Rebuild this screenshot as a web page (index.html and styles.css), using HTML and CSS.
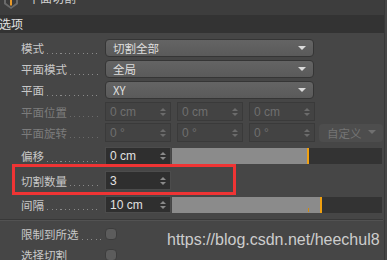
FILE: index.html
```html
<!DOCTYPE html>
<html>
<head>
<meta charset="utf-8">
<link rel="stylesheet" href="styles.css">
</head>
<body>
<div class="panel">
  <div class="titlebar">
    <svg class="ico" width="16" height="10" viewBox="0 0 16 10"><path d="M1 0 L1 4 L8 9 L15 4 L15 0 Z" fill="#6a6a6a"/><path d="M3 0 L3 3 L8 7 L13 3 L13 0 Z" fill="#3a3a3a"/><path d="M7 0 L7 5 L8 6 L9 5 L9 0 Z" fill="#e89a2a"/></svg>
    <span class="title">平面切割</span>
  </div>
  <div class="section">选项</div>
  <div class="rows">
    <div class="row r-sel"><span class="label">模式</span><div class="select"><span>切割全部</span><i class="arrow"></i></div></div>
    <div class="row r-sel"><span class="label">平面模式</span><div class="select"><span>全局</span><i class="arrow"></i></div></div>
    <div class="row r-sel"><span class="label">平面</span><div class="select"><span>XY</span><i class="arrow"></i></div></div>
    <div class="row r-pos"><span class="label dim">平面位置</span>
      <div class="num"><span>0 cm</span><i class="spin"></i></div>
      <div class="num"><span>0 cm</span><i class="spin"></i></div>
      <div class="num"><span>0 cm</span><i class="spin"></i></div>
    </div>
    <div class="row r-rot"><span class="label dim">平面旋转</span>
      <div class="num"><span>0 °</span><i class="spin"></i></div>
      <div class="num"><span>0 °</span><i class="spin"></i></div>
      <div class="num"><span>0 °</span><i class="spin"></i></div>
      <div class="btn"><span>自定义</span><i class="arrow"></i></div>
    </div>
    <div class="row r-off"><span class="label">偏移</span>
      <div class="num on"><span>0 cm</span><i class="spin"></i></div>
      <div class="slider"><div class="fill" style="width:135px"></div><div class="mark"></div></div>
    </div>
    <div class="row r-cnt"><span class="label">切割数量</span>
      <div class="num on"><span>3</span><i class="spin"></i></div>
    </div>
    <div class="row r-gap"><span class="label">间隔</span>
      <div class="num on"><span>10 cm</span><i class="spin"></i></div>
      <div class="slider"><div class="fill" style="width:148px"></div><div class="mark"></div><div class="tick"></div></div>
    </div>
  </div>
  <div class="sep"></div>
  <div class="checks">
    <div class="row r-chk"><span class="label">限制到所选</span><i class="check"></i></div>
    <div class="row r-chk"><span class="label">选择切割</span><i class="check"></i></div>
  </div>
</div>
<div class="redbox"></div>
<div class="watermark">https://blog.csdn.net/heechul8</div>
</body>
</html>
```
FILE: styles.css
```css
html, body {
  margin: 0;
  padding: 0;
}
body {
  width: 387px;
  height: 260px;
  overflow: hidden;
  position: relative;
  background: #464646;
  font-family: "Noto Sans CJK SC", "Liberation Sans", sans-serif;
}
.panel {
  width: 384px;
  height: 260px;
  border-right: 1px solid #383838;
}
.titlebar {
  height: 15px;
  background: #3d3d3d;
  position: relative;
  overflow: hidden;
}
.ico {
  position: absolute;
  left: 3px;
  top: 0;
}
.title {
  position: absolute;
  left: 28px;
  top: -10px;
  font-size: 12px;
  line-height: 16px;
  color: #cfcfcf;
}
.section {
  height: 18px;
  line-height: 18px;
  background: #333333;
  color: #e2e2e2;
  font-size: 12px;
  padding-left: 0;
  text-indent: -1px;
}
.rows {
  padding: 6px 0 0 21px;
}
.row {
  display: flex;
  align-items: center;
}
.r-sel { height: 18px; margin-bottom: 3px; }
.r-pos { height: 19px; margin-bottom: 2px; }
.r-rot { height: 19px; margin-bottom: 5px; }
.r-off { height: 18px; margin-bottom: 6px; }
.r-cnt { height: 19px; margin-bottom: 6px; }
.r-gap { height: 17px; }
.label {
  width: 84px;
  flex: none;
  display: flex;
  align-items: center;
  font-size: 11.5px;
  line-height: 14px;
  color: #c8c8c8;
  white-space: nowrap;
}
.label.dim {
  color: #7c7c7c;
}
.label::after {
  content: "";
  flex: 1;
  height: 1px;
  margin: 10px 4px 0 3px;
  background: repeating-linear-gradient(to right, #8a8a8a 0 1px, transparent 1px 4.5px);
}
.label.dim::after {
  background: repeating-linear-gradient(to right, #6a6a6a 0 1px, transparent 1px 4.5px);
}
.select {
  position: relative;
  width: 209px;
  height: 18px;
  box-sizing: border-box;
  border: 1px solid #353535;
  border-radius: 4px;
  background: linear-gradient(#646464, #5a5a5a);
  color: #dedede;
  font-size: 11.5px;
  line-height: 16px;
  padding-left: 7px;
}
.arrow {
  position: absolute;
  right: 7px;
  top: 6px;
  width: 0;
  height: 0;
  border-left: 4px solid transparent;
  border-right: 4px solid transparent;
  border-top: 4px solid #dadada;
}
.num {
  position: relative;
  width: 66px;
  height: 100%;
  box-sizing: border-box;
  border: 1px solid #3a3a3a;
  background: #434343;
  color: #6f6f6f;
  font-family: "Liberation Sans", sans-serif;
  font-size: 12px;
  display: flex;
  align-items: center;
  padding-left: 4px;
  margin-right: 6px;
  flex: none;
}
.num.on {
  background: #2f2f2f;
  border-color: #4c4c4c;
  color: #e2e2e2;
  margin-right: 1px;
}
.spin {
  position: absolute;
  right: 4px;
  top: 50%;
  margin-top: -4px;
  width: 6px;
  height: 8px;
}
.spin::before, .spin::after {
  content: "";
  position: absolute;
  left: 0;
  border-left: 3px solid transparent;
  border-right: 3px solid transparent;
}
.spin::before {
  top: 0;
  border-bottom: 3px solid #6c6c6c;
}
.spin::after {
  bottom: 0;
  border-top: 3px solid #6c6c6c;
}
.num.on .spin::before { border-bottom-color: #8a8a8a; }
.num.on .spin::after { border-top-color: #8a8a8a; }
.btn {
  position: relative;
  width: 64px;
  height: 18px;
  margin-left: -2px;
  box-sizing: border-box;
  border-radius: 4px;
  background: #4d4d4d;
  color: #747474;
  font-size: 11.5px;
  line-height: 18px;
  padding-left: 8px;
}
.btn .arrow {
  border-top-color: #707070;
}
.slider {
  position: relative;
  width: 210px;
  height: 16px;
  background: #333333;
  display: flex;
}
.fill {
  height: 100%;
  background: #8b8b8b;
}
.mark {
  width: 2px;
  height: 100%;
  background: #f0a010;
}
.tick {
  position: absolute;
  left: 136px;
  bottom: 1px;
  width: 1px;
  height: 4px;
  background: #d08a10;
}
.sep {
  margin-top: 6px;
  width: 383px;
  height: 1px;
  background: #383838;
  border-bottom: 1px solid #525252;
}
.checks {
  padding: 6px 0 0 21px;
}
.r-chk {
  height: 14px;
  margin-bottom: 7px;
}
.check {
  width: 12px;
  height: 12px;
  box-sizing: border-box;
  border-radius: 4px;
  background: #5c5c5c;
  border: 1px solid #3c3c3c;
}
.redbox {
  position: absolute;
  left: 12px;
  top: 164px;
  width: 224px;
  height: 31px;
  box-sizing: border-box;
  border: 3px solid #ef3434;
}
.watermark {
  position: absolute;
  left: 167px;
  top: 231px;
  font-family: "Liberation Sans", sans-serif;
  font-size: 16px;
  color: #cdcdcd;
  white-space: nowrap;
}
```
